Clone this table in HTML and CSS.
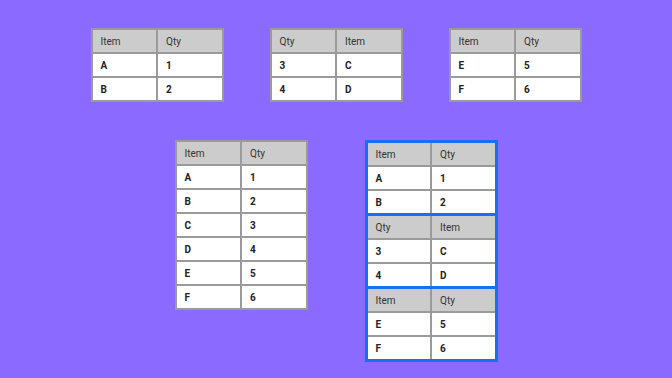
FILE: index.html
```html
<!DOCTYPE html>
<html>
<head>
<meta charset="utf-8">
<link rel="stylesheet" href="styles.css">
</head>
<body>
<div class="page">
  <div class="row top">
    <div class="tbl">
      <div class="th">Item</div><div class="th">Qty</div>
      <div class="td">A</div><div class="td">1</div>
      <div class="td">B</div><div class="td">2</div>
    </div>
    <div class="tbl">
      <div class="th">Qty</div><div class="th">Item</div>
      <div class="td">3</div><div class="td">C</div>
      <div class="td">4</div><div class="td">D</div>
    </div>
    <div class="tbl">
      <div class="th">Item</div><div class="th">Qty</div>
      <div class="td">E</div><div class="td">5</div>
      <div class="td">F</div><div class="td">6</div>
    </div>
  </div>
  <div class="row bottom">
    <div class="tbl">
      <div class="th">Item</div><div class="th">Qty</div>
      <div class="td">A</div><div class="td">1</div>
      <div class="td">B</div><div class="td">2</div>
      <div class="td">C</div><div class="td">3</div>
      <div class="td">D</div><div class="td">4</div>
      <div class="td">E</div><div class="td">5</div>
      <div class="td">F</div><div class="td">6</div>
    </div>
    <div class="group">
      <div class="sect">
        <div class="th">Item</div><div class="th">Qty</div>
        <div class="td">A</div><div class="td">1</div>
        <div class="td">B</div><div class="td">2</div>
      </div>
      <div class="sect">
        <div class="th">Qty</div><div class="th">Item</div>
        <div class="td">3</div><div class="td">C</div>
        <div class="td">4</div><div class="td">D</div>
      </div>
      <div class="sect">
        <div class="th">Item</div><div class="th">Qty</div>
        <div class="td">E</div><div class="td">5</div>
        <div class="td">F</div><div class="td">6</div>
      </div>
    </div>
  </div>
</div>
</body>
</html>
```
FILE: styles.css
```css
html, body {
  margin: 0;
  padding: 0;
  background: #8b6bff;
  font-family: Roboto, "Liberation Sans", sans-serif;
}
.page {
  width: 672px;
  height: 378px;
  padding-top: 28px;
  box-sizing: border-box;
  display: flex;
  flex-direction: column;
  gap: 38px;
}
.row {
  display: flex;
  justify-content: center;
  align-items: flex-start;
}
.top { gap: 46px; }
.bottom { gap: 57px; }
.tbl, .sect {
  display: grid;
  grid-template-columns: 1fr 1fr;
  gap: 2px;
  background: #9a9a9a;
}
.tbl {
  width: 133px;
  box-sizing: border-box;
  border: 2px solid #9a9a9a;
}
.group {
  width: 133px;
  box-sizing: border-box;
  border: 3px solid #1a6ff0;
  background: #1a6ff0;
  display: flex;
  flex-direction: column;
  gap: 3px;
}
.th, .td {
  height: 22px;
  display: flex;
  align-items: center;
  padding-left: 8px;
  font-size: 10px;
}
.th {
  background: #cccccc;
  color: #333;
  font-weight: 400;
}
.td {
  background: #fff;
  color: #222;
  font-weight: 700;
}
```
